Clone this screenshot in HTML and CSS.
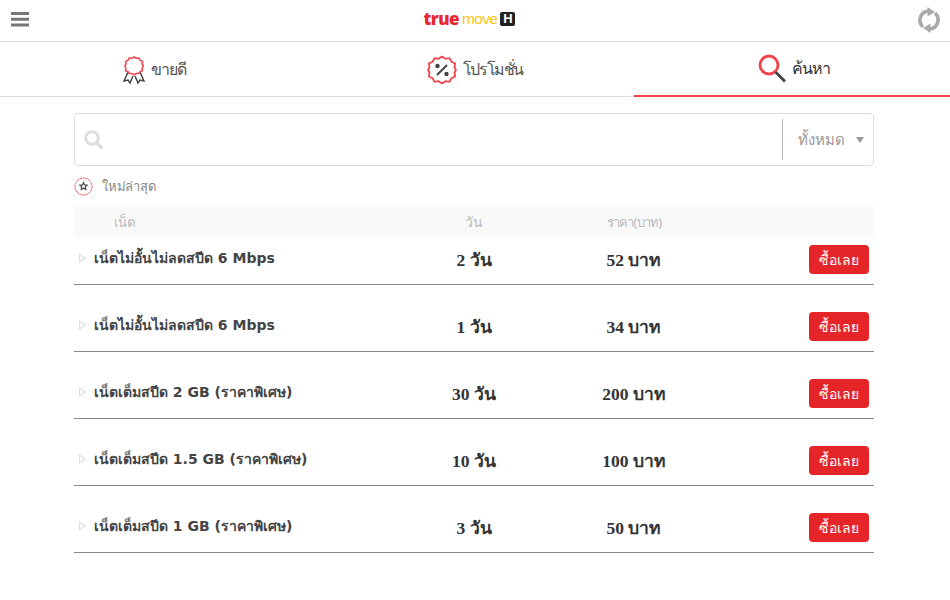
FILE: index.html
```html
<!DOCTYPE html>
<html lang="th">
<head>
<meta charset="utf-8">
<title>TrueMove H</title>
<link rel="stylesheet" href="styles.css">
</head>
<body>
<header class="topbar">
  <svg class="burger" width="18" height="15" viewBox="0 0 18 15"><path d="M0 0h18v3H0zM0 5.700h18v3H0zM0 11.500h18v3H0z" fill="#777"/></svg>
  <div class="logo"><span class="logo-true">true</span><span class="logo-move">move</span><span class="logo-h">H</span></div>
  <svg class="sync" width="22" height="26" viewBox="0 0 22 26"><g fill="none" stroke="#aaa" stroke-width="3.600"><path d="M5 20A9.200 9.200 0 0 1 10.500 4"/><path d="M17 6A9.200 9.200 0 0 1 11.500 22"/></g><path d="M9.500 0l7.500 5-7.500 4.500zM12.500 16.500L5 21l7.500 5z" fill="#aaa"/></svg>
</header>
<nav class="tabs">
  <a class="tab tab-best">
    <svg width="22" height="30" viewBox="0 0 22 30"><path d="M5 17L1 26l4-1 2 3 3-7M17 17l4 9-4-1-2 3-3-7" fill="none" stroke="#444" stroke-width="1.500"/><path d="M11 1.500l2.500 1.700 3-.3 1.300 2.700 2.700 1.300-.3 3 1.200 2.600-1.200 2.600.3 3-2.700 1-1.300 2-3 .3-2.500 1.500-2.500-1.500-3-.3-1.300-2-2.700-1 .3-3L.8 12.500 2 9.900l-.3-3 2.700-1.300 1.300-2.700 3 .3z" transform="translate(1.200 .6) scale(.89 .84)" fill="#fff" stroke="#f2434d" stroke-width="1.800"/></svg>
    <span>ขายดี</span>
  </a>
  <a class="tab tab-promo">
    <svg width="30" height="30" viewBox="0 0 30 30"><path d="M15 1.500l3.500 2.300 4-.6 2 3.500 3.600 1.800-.6 4L29 15l-1.500 2.500.6 4-3.600 1.800-2 3.500-4-.6L15 28.500l-3.500-2.300-4 .6-2-3.500-3.600-1.800.6-4L1 15l1.500-2.500-.6-4 3.600-1.800 2-3.500 4 .6z" fill="#fff" stroke="#f2434d" stroke-width="1.800"/><path d="M10 20L20 10" stroke="#444" stroke-width="2"/><circle cx="10.500" cy="11" r="2.200" fill="#444"/><circle cx="19.500" cy="19" r="2.200" fill="#444"/></svg>
    <span>โปรโมชั่น</span>
  </a>
  <a class="tab active">
    <svg width="28" height="30" viewBox="0 0 28 30"><circle cx="11" cy="11" r="9" fill="none" stroke="#f2434d" stroke-width="2.800"/><path d="M17.500 18L27 27.500" stroke="#444" stroke-width="2.800"/></svg>
    <span>ค้นหา</span>
  </a>
</nav>
<main class="content">
  <div class="searchbox">
    <svg class="search-icon" width="20" height="20" viewBox="0 0 20 20"><circle cx="8" cy="8" r="6.300" fill="none" stroke="#ddd" stroke-width="3"/><path d="M12.500 12.500L18.500 18.500" stroke="#ddd" stroke-width="3.400"/></svg>
    <div class="spacer"></div>
    <div class="filter"><span>ทั้งหมด</span><i class="caret"></i></div>
  </div>
  <div class="latest">
    <svg width="19" height="19" viewBox="0 0 19 19"><circle cx="9.500" cy="9.500" r="8.500" fill="#fff" stroke="#f2434d" stroke-dasharray="2 .6"/><path d="M9.500 5.700l1.100 2.200 2.500.3-1.800 1.700.5 2.500-2.300-1.200-2.300 1.200.5-2.500-1.800-1.700 2.500-.3z" fill="none" stroke="#444" stroke-width="1.200"/></svg>
    <span>ใหม่ล่าสุด</span>
  </div>
  <div class="thead row-grid">
    <div class="th-name">เน็ต</div><div class="center">วัน</div><div class="center th-price">ราคา(บาท)</div><div></div>
  </div>
  <div class="row row-grid"><div class="name"><i class="arrow"></i><span>เน็ตไม่อั้นไม่ลดสปีด 6 Mbps</span></div><div class="val">2 วัน</div><div class="val">52 บาท</div><div class="act"><button class="buy">ซื้อเลย</button></div></div>
  <div class="row row-grid"><div class="name"><i class="arrow"></i><span>เน็ตไม่อั้นไม่ลดสปีด 6 Mbps</span></div><div class="val">1 วัน</div><div class="val">34 บาท</div><div class="act"><button class="buy">ซื้อเลย</button></div></div>
  <div class="row row-grid"><div class="name"><i class="arrow"></i><span>เน็ตเต็มสปีด 2 GB (ราคาพิเศษ)</span></div><div class="val">30 วัน</div><div class="val">200 บาท</div><div class="act"><button class="buy">ซื้อเลย</button></div></div>
  <div class="row row-grid"><div class="name"><i class="arrow"></i><span>เน็ตเต็มสปีด 1.5 GB (ราคาพิเศษ)</span></div><div class="val">10 วัน</div><div class="val">100 บาท</div><div class="act"><button class="buy">ซื้อเลย</button></div></div>
  <div class="row row-grid"><div class="name"><i class="arrow"></i><span>เน็ตเต็มสปีด 1 GB (ราคาพิเศษ)</span></div><div class="val">3 วัน</div><div class="val">50 บาท</div><div class="act"><button class="buy">ซื้อเลย</button></div></div>
</main>
</body>
</html>
```
FILE: styles.css
```css
* { box-sizing: border-box; }
html, body { margin: 0; padding: 0; height: 100%; overflow: hidden; }
body { background: #fff; color: #444; font-family: "Noto Sans", "Open Sans", sans-serif; }

.topbar { height: 42px; border-bottom: 1px solid #ddd; display: flex; align-items: center; justify-content: space-between; padding: 0 11px; }
.burger { display: block; margin-top: -2px; }
.sync { display: block; margin-top: -1px; margin-right: -1px; }
.logo { display: flex; align-items: center; line-height: 16px; margin: -3px 8px 0 0; }
.logo-true { color: #e8262d; font-family: "Open Sans", sans-serif; font-weight: 800; font-size: 17px; letter-spacing: -.6px; }
.logo-move { color: #fdc515; font-family: "Liberation Sans", sans-serif; font-size: 15.500px; letter-spacing: -.6px; margin-left: 3px; }
.logo-h { background: #222; color: #fff; font-family: "Liberation Sans", sans-serif; font-size: 13px; font-weight: 700; width: 15px; height: 14px; line-height: 14px; text-align: center; border-radius: 2px; margin-left: 3px; }

.tabs { display: grid; grid-template-columns: 317px 317px 1fr; height: 55px; border-bottom: 1px solid #ddd; }
.tab { display: flex; align-items: center; justify-content: center; gap: 6px; font-size: 16px; letter-spacing: -1.100px; color: #555; height: 55px; }
.tab-best { padding-right: 8px; }
.tab-promo { padding-right: 1px; letter-spacing: -1.400px; }
.tab.active { border-bottom: 2px solid #f2434d; color: #333; font-size: 16px; letter-spacing: -1px; gap: 6px; padding-left: 4px; }

.content { width: 800px; margin: 16px 0 0 74px; }
.searchbox { height: 53px; border: 1px solid #ddd; border-radius: 4px; display: flex; align-items: center; padding: 2px 0 2px 9px; }
.spacer { flex: 1; }
.filter { width: 91px; height: 41px; border-left: 1px solid #bbb; display: flex; align-items: center; padding-left: 15px; font-size: 15px; color: #999; gap: 11px; }
.caret { width: 0; height: 0; border: 4px solid transparent; border-top: 6px solid #999; border-bottom: 0; }

.latest { height: 41px; display: flex; align-items: center; gap: 9px; font-size: 13px; letter-spacing: -.2px; color: #888; }

.row-grid { display: grid; grid-template-columns: 320px 160px 160px 160px; }
.thead { height: 30px; background: #f9f9f9; align-items: center; font-size: 14px; color: #bbb; }
.th-name { padding-left: 40px; font-size: 13px; }
.th-price { font-size: 13px; letter-spacing: -.8px; }
.center { text-align: center; }

.row { height: 48px; margin-bottom: 19px; border-bottom: 1px solid #888; align-items: start; }
.name { display: flex; align-items: center; font-family: "DejaVu Sans", sans-serif; font-weight: 700; font-size: 14px; color: #444; height: 42px; padding-left: 5px; }
.arrow { position: relative; width: 0; height: 0; border: 5px solid transparent; border-left: 7px solid #ddd; border-right: 0; margin-right: 8px; }
.arrow::after { content: ""; position: absolute; left: -6px; top: -3px; width: 0; height: 0; border: 3px solid transparent; border-left: 4px solid #fff; border-right: 0; }
.val { font-family: "Liberation Serif", serif; font-weight: 700; font-size: 17.500px; color: #333; text-align: center; height: 46px; line-height: 47px; }
.act { display: flex; justify-content: flex-end; padding: 8px 5px 0 0; }
.buy { width: 60px; height: 29px; border: 0; border-radius: 4px; background: #e52527; color: #fff; font-family: "Noto Sans", sans-serif; font-size: 14px; padding: 0; }
```
